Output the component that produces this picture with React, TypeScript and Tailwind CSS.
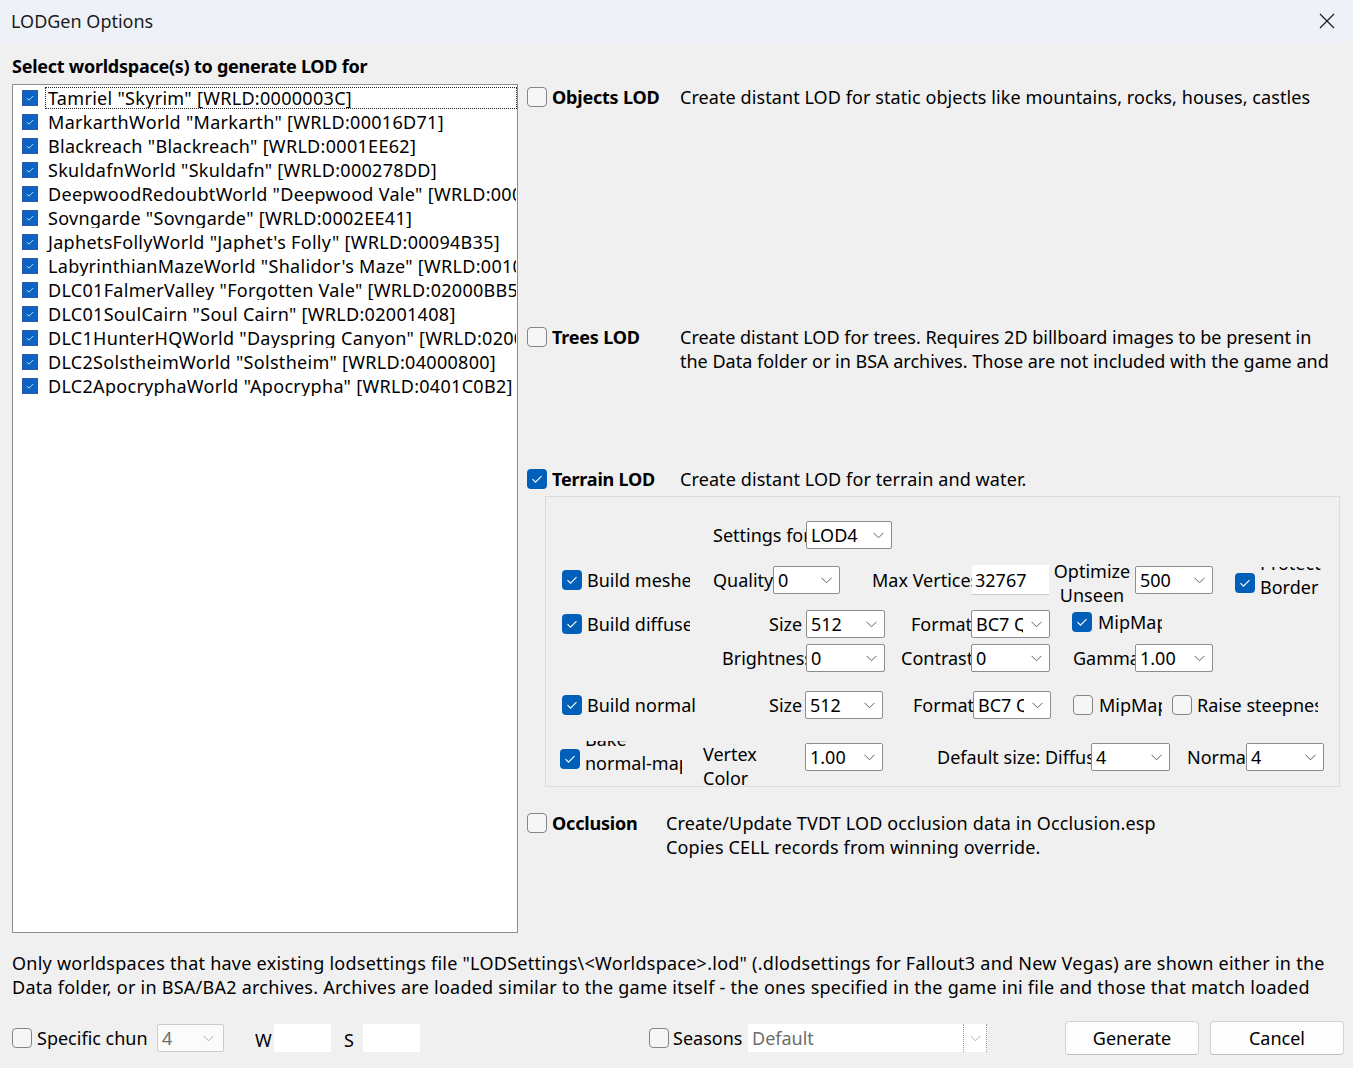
import React from 'react';

function Chevron({ color = '#5f5f5f' }: { color?: string }) {
  return (
    <svg width="11" height="7" viewBox="0 0 11 7" fill="none" stroke={color} strokeWidth="1">
      <path d="M0.5 0.8l5 5 5-5" />
    </svg>
  );
}

function Tick({ size = 20 }: { size?: number }) {
  return (
    <svg width={size} height={size} viewBox="0 0 20 20" fill="none" stroke="#ffffff" strokeWidth="1.1">
      <path d="M5.5 10.2l3 3 6-6" />
    </svg>
  );
}

function Check({ checked = false }: { checked?: boolean }) {
  return checked ? (
    <div className="w-5 h-5 shrink-0 rounded-[4px] bg-[#005fb8] flex items-center justify-center">
      <Tick />
    </div>
  ) : (
    <div className="w-5 h-5 shrink-0 rounded-[4px] border border-[#858585] bg-[#f6f6f6]" />
  );
}

function Combo({ value, className }: { value: string; className: string }) {
  return (
    <div
      className={`${className} h-[28px] shrink-0 bg-white border border-[#8d8d8d] rounded-[2px] flex items-center pl-[4px] overflow-hidden`}
    >
      <span className="flex-1 overflow-hidden whitespace-nowrap">{value}</span>
      <div className="w-[26px] shrink-0 flex items-center justify-center">
        <Chevron />
      </div>
    </div>
  );
}

function Clip({ className, children }: { className: string; children: React.ReactNode }) {
  return <div className={`${className} shrink-0 overflow-hidden whitespace-nowrap`}>{children}</div>;
}

const worlds = [
  'Tamriel "Skyrim" [WRLD:0000003C]',
  'MarkarthWorld "Markarth" [WRLD:00016D71]',
  'Blackreach "Blackreach" [WRLD:0001EE62]',
  'SkuldafnWorld "Skuldafn" [WRLD:000278DD]',
  'DeepwoodRedoubtWorld "Deepwood Vale" [WRLD:0001FAE2]',
  'Sovngarde "Sovngarde" [WRLD:0002EE41]',
  'JaphetsFollyWorld "Japhet\'s Folly" [WRLD:00094B35]',
  'LabyrinthianMazeWorld "Shalidor\'s Maze" [WRLD:0010B9D6]',
  'DLC01FalmerValley "Forgotten Vale" [WRLD:02000BB5]',
  'DLC01SoulCairn "Soul Cairn" [WRLD:02001408]',
  'DLC1HunterHQWorld "Dayspring Canyon" [WRLD:0200A6A6]',
  'DLC2SolstheimWorld "Solstheim" [WRLD:04000800]',
  'DLC2ApocryphaWorld "Apocrypha" [WRLD:0401C0B2]',
];

export default function App() {
  return (
    <div className="w-[1353px] h-[1068px] bg-[#f0f0f0] flex flex-col overflow-hidden text-[18px] leading-[24px] text-[#000] font-['Noto_Sans',sans-serif]">
      {/* Title bar */}
      <div className="h-[42px] shrink-0 bg-[#eef2f8] flex items-center justify-between">
        <span className="ml-[11px] text-[#1b1b1b]">LODGen Options</span>
        <div className="w-[46px] h-full flex items-center justify-center mr-[3px]">
          <svg width="16" height="16" viewBox="0 0 16 16" fill="none" stroke="#1b1b1b" strokeWidth="1.2">
            <path d="M1 1l14 14M15 1L1 15" />
          </svg>
        </div>
      </div>

      {/* Top section */}
      <div className="flex pl-[12px] shrink-0">
        {/* Worldspace list */}
        <div className="w-[506px] shrink-0 flex flex-col">
          <div className="mt-[12px] h-[24px] font-bold tracking-[-0.25px] whitespace-nowrap">
            Select worldspace(s) to generate LOD for
          </div>
          <div className="mt-[6px] h-[849px] bg-white border border-[#8a8e94] pt-[1px] overflow-hidden tracking-[0.3px]">
            {worlds.map((w, i) => (
              <div key={w} className="h-[24px] flex items-center pl-[9px]">
                <div className="w-4 h-4 shrink-0 bg-[#0b63c5] border border-[#2f5d96] flex items-center justify-center">
                  <Tick size={16} />
                </div>
                <div
                  className={`ml-[7px] h-[22px] flex-1 flex items-center pl-[2px] whitespace-nowrap overflow-hidden ${
                    i === 0 ? 'border border-dotted border-[#222]' : 'border border-transparent'
                  }`}
                >
                  {w}
                </div>
              </div>
            ))}
          </div>
        </div>

        {/* Options */}
        <div className="ml-[9px] flex flex-col">
          <div className="mt-[43px] h-[24px] flex items-center">
            <Check />
            <Clip className="ml-[5px] w-[128px] font-bold tracking-[-0.2px]">Objects LOD</Clip>
            <div className="whitespace-nowrap tracking-[0.08px]">
              Create distant LOD for static objects like mountains, rocks, houses, castles
            </div>
          </div>

          <div className="mt-[216px] h-[48px] flex items-start">
            <div className="h-[24px] flex items-center">
              <Check />
            </div>
            <Clip className="ml-[5px] w-[128px] font-bold tracking-[-0.2px]">Trees LOD</Clip>
            <div className="w-[660px] overflow-hidden">
              <div className="whitespace-nowrap">Create distant LOD for trees. Requires 2D billboard images to be present in</div>
              <div className="whitespace-nowrap">the Data folder or in BSA archives. Those are not included with the game and</div>
            </div>
          </div>

          <div className="mt-[94px] h-[24px] flex items-center">
            <Check checked />
            <Clip className="ml-[5px] w-[128px] font-bold tracking-[-0.2px]">Terrain LOD</Clip>
            <div className="whitespace-nowrap tracking-[0.1px]">Create distant LOD for terrain and water.</div>
          </div>

          {/* Terrain settings group */}
          <div className="mt-[5px] ml-[18px] w-[795px] h-[291px] border border-[#dcdcdc] flex flex-col">
            <div className="mt-[24px] h-[28px] flex items-center">
              <Clip className="ml-[167px] w-[93px]">Settings for LOD level</Clip>
              <Combo value="LOD4" className="w-[86px]" />
            </div>

            <div className="mt-[17px] h-[28px] flex items-center">
              <div className="ml-[16px]"><Check checked /></div>
              <Clip className="ml-[5px] w-[103px]">Build meshes</Clip>
              <Clip className="ml-[23px] w-[60px]">Quality</Clip>
              <Combo value="0" className="w-[67px]" />
              <Clip className="ml-[32px] w-[100px]">Max Vertices</Clip>
              <div className="w-[77px] h-[30px] shrink-0 bg-white border-b border-[#c8c8c8] pl-[3px] flex items-center">32767</div>
              <div className="w-[86px] h-[46px] shrink-0 overflow-hidden flex flex-col justify-center items-center text-center whitespace-nowrap mt-[6px]">
                <div>Optimize</div>
                <div>Unseen</div>
              </div>
              <Combo value="500" className="w-[78px]" />
              <div className="ml-[22px] mt-[6px]"><Check checked /></div>
              <div className="ml-[5px] w-[62px] h-[32px] shrink-0 overflow-hidden flex flex-col justify-end whitespace-nowrap mt-[6px]">
                <div>Protect</div>
                <div>Border</div>
              </div>
            </div>

            <div className="mt-[16px] h-[28px] flex items-center">
              <div className="ml-[16px]"><Check checked /></div>
              <Clip className="ml-[5px] w-[103px]">Build diffuse</Clip>
              <Clip className="ml-[79px] w-[37px]">Size</Clip>
              <Combo value="512" className="w-[79px]" />
              <Clip className="ml-[26px] w-[60px]">Format</Clip>
              <Combo value="BC7 Quick" className="w-[79px]" />
              <div className="ml-[22px] -mt-[4px]"><Check checked /></div>
              <Clip className="ml-[6px] w-[64px] -mt-[4px]">MipMaps</Clip>
            </div>

            <div className="mt-[6px] h-[28px] flex items-center">
              <Clip className="ml-[176px] w-[84px]">Brightness</Clip>
              <Combo value="0" className="w-[79px]" />
              <Clip className="ml-[16px] w-[70px]">Contrast</Clip>
              <Combo value="0" className="w-[79px]" />
              <Clip className="ml-[23px] w-[62px]">Gamma</Clip>
              <Combo value="1.00" className="w-[78px]" />
            </div>

            <div className="mt-[19px] h-[28px] flex items-center">
              <div className="ml-[16px]"><Check checked /></div>
              <Clip className="ml-[5px] w-[120px]">Build normal</Clip>
              <Clip className="ml-[62px] w-[36px]">Size</Clip>
              <Combo value="512" className="w-[78px]" />
              <Clip className="ml-[30px] w-[60px]">Format</Clip>
              <Combo value="BC7 Quick" className="w-[78px]" />
              <div className="ml-[22px]"><Check /></div>
              <Clip className="ml-[6px] w-[63px]">MipMaps</Clip>
              <div className="ml-[10px]"><Check /></div>
              <Clip className="ml-[5px] w-[121px]">Raise steepness</Clip>
            </div>

            <div className="mt-[24px] h-[28px] flex items-center">
              <div className="ml-[14px] mt-[4px]"><Check checked /></div>
              <div className="ml-[5px] w-[97px] h-[34px] shrink-0 overflow-hidden flex flex-col justify-end whitespace-nowrap mt-[2px]">
                <div>Bake</div>
                <div>normal-maps</div>
              </div>
              <div className="ml-[21px] w-[102px] h-[48px] shrink-0 flex flex-col justify-center whitespace-nowrap mt-[18px]">
                <div>Vertex</div>
                <div>Color</div>
              </div>
              <Combo value="1.00" className="w-[78px]" />
              <Clip className="ml-[54px] w-[154px]">Default size: Diffuse</Clip>
              <Combo value="4" className="w-[79px]" />
              <Clip className="ml-[17px] w-[59px]">Normal</Clip>
              <Combo value="4" className="w-[78px]" />
            </div>
          </div>

          <div className="mt-[24px] h-[48px] flex items-start">
            <div className="h-[24px] flex items-center">
              <Check />
            </div>
            <Clip className="ml-[5px] w-[114px] font-bold tracking-[-0.2px]">Occlusion</Clip>
            <div className="whitespace-nowrap tracking-[0.15px]">
              <div>Create/Update TVDT LOD occlusion data in Occlusion.esp</div>
              <div>Copies CELL records from winning override.</div>
            </div>
          </div>
        </div>
      </div>

      {/* Note */}
      <div className="mt-[18px] ml-[12px] w-[1328px] h-[48px] overflow-hidden shrink-0 tracking-[0.25px]">
        <div className="whitespace-nowrap">
          Only worldspaces that have existing lodsettings file "LODSettings\&lt;Worldspace&gt;.lod" (.dlodsettings for Fallout3 and New Vegas) are shown either in the
        </div>
        <div className="whitespace-nowrap">
          Data folder, or in BSA/BA2 archives. Archives are loaded similar to the game itself - the ones specified in the game ini file and those that match loaded
        </div>
      </div>

      {/* Bottom row */}
      <div className="mt-[22px] h-[34px] flex items-center shrink-0">
        <div className="ml-[12px]"><Check /></div>
        <Clip className="ml-[5px] w-[111px]">Specific chunk</Clip>
        <div className="ml-[9px] w-[67px] h-[28px] shrink-0 bg-[#fbfbfb] border border-[#cccccc] rounded-[2px] flex items-center pl-[4px] pr-[9px] text-[#6d6d6d]">
          <span className="flex-1">4</span>
          <Chevron color="#a8a8a8" />
        </div>
        <Clip className="ml-[31px] w-[19px] mt-[4px]">W</Clip>
        <div className="w-[57px] h-[28px] shrink-0 bg-white" />
        <Clip className="ml-[13px] w-[19px] mt-[4px]">S</Clip>
        <div className="w-[57px] h-[28px] shrink-0 bg-white" />
        <div className="ml-[229px]"><Check /></div>
        <Clip className="ml-[4px] w-[75px]">Seasons</Clip>
        <div className="w-[239px] h-[28px] shrink-0 bg-white flex items-center text-[#6d6d6d]">
          <span className="flex-1 pl-[4px]">Default</span>
          <div className="w-[24px] h-full border-l border-r border-dotted border-[#9a9a9a] flex items-center justify-center">
            <Chevron color="#b0b0b0" />
          </div>
        </div>
        <div className="ml-[78px] w-[134px] h-[34px] shrink-0 bg-[#fdfdfd] border border-[#d2d2d2] border-b-[#bdbdbd] rounded-[4px] flex items-center justify-center">
          Generate
        </div>
        <div className="ml-[11px] w-[134px] h-[34px] shrink-0 bg-[#fdfdfd] border border-[#d2d2d2] border-b-[#bdbdbd] rounded-[4px] flex items-center justify-center">
          Cancel
        </div>
      </div>
    </div>
  );
}
